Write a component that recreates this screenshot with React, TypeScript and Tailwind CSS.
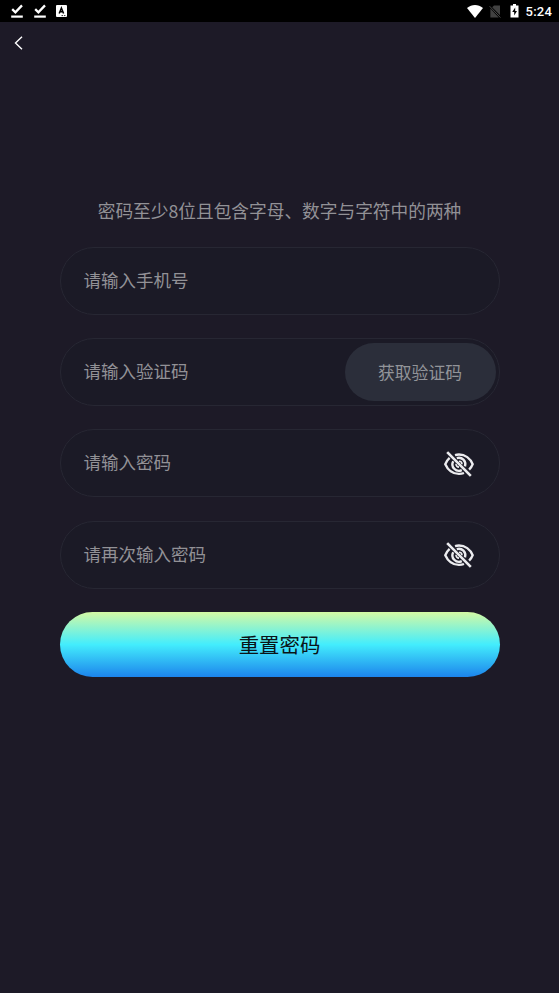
import type { ReactNode } from "react";

interface FieldProps {
  placeholder: string;
  children?: ReactNode;
}

function DownloadDoneIcon() {
  return (
    <svg className="h-[14px] w-3" viewBox="0 0 12 14" fill="none" stroke="#fff">
      <path d="M1.2 5.2 4.4 8.3 11 1.4" strokeWidth="2.3" />
      <path d="M.2 12.6h11.6" strokeWidth="2.2" />
    </svg>
  );
}

function KeyboardIcon() {
  return (
    <svg className="h-3 w-[11px]" viewBox="0 0 11 12">
      <rect width="11" height="12" rx="1" fill="#fff" />
      <path d="M3.2 8.6 5.4 3l2.2 5.6M4 6.8h2.9" stroke="#000" strokeWidth="1.5" fill="none" />
      <path d="M5.5 10.6h1.6M8 10.6h1.4" stroke="#000" strokeWidth=".8" />
    </svg>
  );
}

function StatusBar() {
  return (
    <div className="flex h-[22px] items-center justify-between bg-black pr-[7px] pl-[11px]">
      <div className="flex items-center gap-[10.5px]">
        <DownloadDoneIcon />
        <DownloadDoneIcon />
        <KeyboardIcon />
      </div>
      <div className="flex items-center">
        <svg className="h-[13px] w-4" viewBox="0 0 16 13" fill="#fff">
          <path d="M8 13 0 3.1C4.8-.9 11.2-.9 16 3.1Z" />
        </svg>
        <svg className="ml-1.5 h-[13px] w-3" viewBox="0 0 12 13">
          <path d="M5 .4h6v9.8L3.2 2.2Z" fill="#424242" />
          <path d="M1.4 3.6v8.8h8.4Z" fill="#424242" />
          <path d="M.6 1.2 11.4 12.6" stroke="#555" strokeWidth=".9" />
        </svg>
        <svg className="ml-[9px] h-[14px] w-[9px]" viewBox="0 0 9 14">
          <path d="M3 0h3v1.5h2.5v12H.5v-12H3Z" fill="#fff" />
          <path d="M5.2 3.6 2.2 8h2v3.6L7 7H5.2Z" fill="#000" />
        </svg>
        <span className="mt-0.5 ml-[7px] font-['Roboto',sans-serif] text-[13px] leading-5 font-medium tracking-[.2px] text-white">
          5:24
        </span>
      </div>
    </div>
  );
}

function EyeOffIcon() {
  return (
    <svg className="h-7 w-[30px]" viewBox="0 0 30 28" fill="none" stroke="#ececef" strokeWidth="2.4">
      <path d="M5.6 7.8C3.8 9.4 2.2 11.6 1.3 14.2c2.4 5.7 7.7 9.7 13.7 9.7 1.8 0 3.5-.3 5-.9" />
      <path d="M11 5.1c1.3-.4 2.6-.6 4-.6 6 0 11.3 4 13.7 9.7-.8 2.2-2 3.9-3.6 5.4" />
      <path d="M9.2 11.2a6.5 6.5 0 0 0 8.6 8.9" />
      <path d="M12.8 8.1a6.5 6.5 0 0 1 8.2 8.2" />
      <path d="M15 11.3a3 3 0 0 1 3 3M12 13.9a3 3 0 0 0 3 3.2" strokeWidth="1.6" />
      <path d="M3.2 2.2 26.8 25.8" strokeWidth="2.6" />
    </svg>
  );
}

function Field({ placeholder, children }: FieldProps) {
  return (
    <div className="flex h-[68px] items-center justify-between rounded-full border border-[#272733] bg-[#1b1a26] pr-[3px] pl-[23px]">
      <span className="-mt-0.5 text-[17.5px] leading-6 text-[#929196]">{placeholder}</span>
      {children}
    </div>
  );
}

function PasswordField({ placeholder }: FieldProps) {
  return (
    <Field placeholder={placeholder}>
      <button type="button" className="mt-px mr-[22px]" aria-label={placeholder}>
        <EyeOffIcon />
      </button>
    </Field>
  );
}

export default function App() {
  return (
    <div className="min-h-screen bg-[#1d1a27] font-['Noto_Sans_CJK_SC',sans-serif]">
      <StatusBar />
      <header className="flex h-10 items-center pt-px pl-[14px]">
        <svg className="h-[14px] w-[9px]" viewBox="0 0 9 14" fill="none" stroke="#fff" strokeWidth="1.4">
          <path d="M8 .7 1.5 7 8 13.3" />
        </svg>
      </header>
      <main className="mx-auto w-[440px] pt-[136px]">
        <p className="text-center text-[17.7px] leading-6 whitespace-nowrap text-[#929196]">
          密码至少8位且包含字母、数字与字符中的两种
        </p>
        <form className="mt-[25px] flex flex-col gap-[23.2px]">
          <Field placeholder="请输入手机号" />
          <Field placeholder="请输入验证码">
            <button type="button" className="h-[58px] w-[151px] rounded-full bg-[#2b2e3a] text-[16.8px] text-[#929499]">
              获取验证码
            </button>
          </Field>
          <PasswordField placeholder="请输入密码" />
          <PasswordField placeholder="请再次输入密码" />
          <button
            type="button"
            className="h-[65px] rounded-full bg-[linear-gradient(180deg,#d4f9a4_0%,#43edfd_50%,#1c84ec_100%)] text-[20.4px] text-[#0b1418]"
          >
            重置密码
          </button>
        </form>
      </main>
    </div>
  );
}
